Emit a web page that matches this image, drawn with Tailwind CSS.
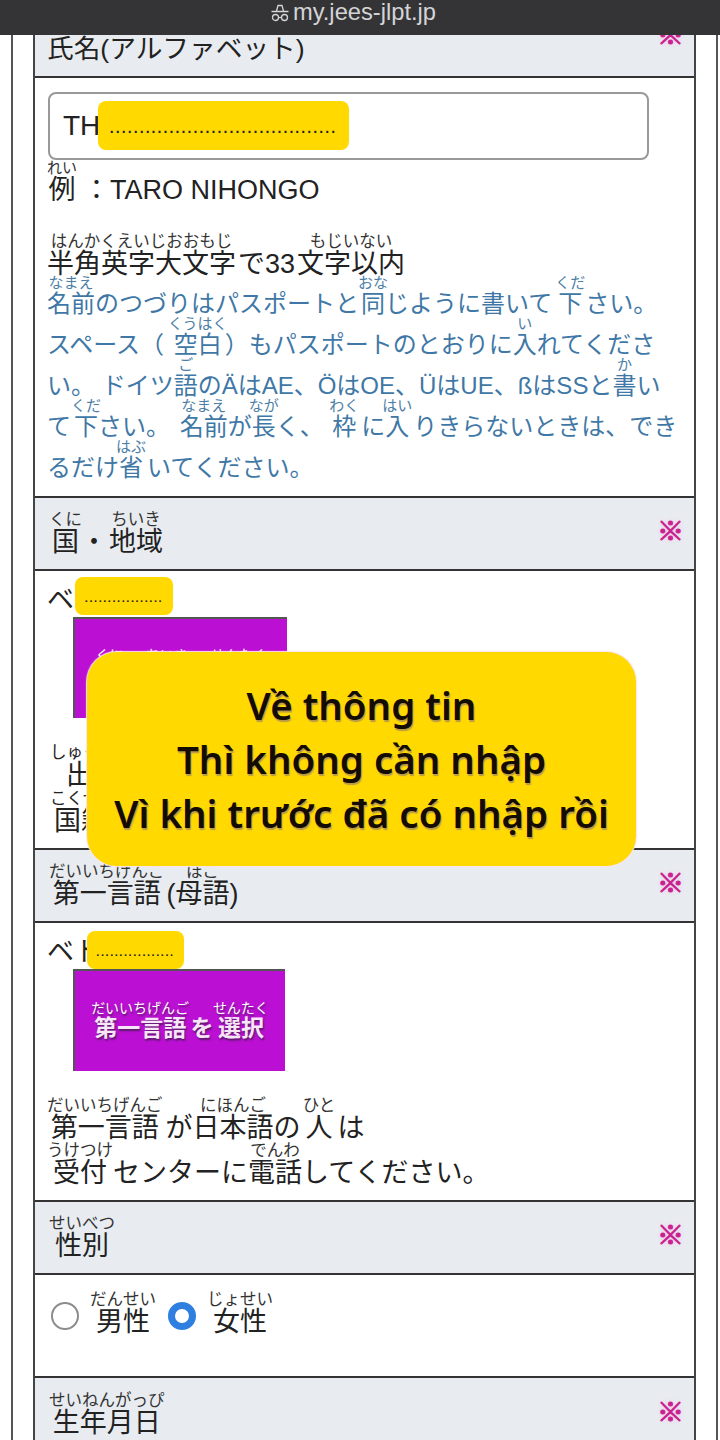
<!DOCTYPE html>
<html lang="ja">
<head>
    <meta charset="UTF-8">
    <meta name="viewport" content="width=device-width, initial-scale=1.0">
    <title>my.jees-jlpt.jp</title>
    <script src="https://cdn.jsdelivr.net/npm/@tailwindcss/browser@4"></script>
</head>
<body class="relative w-[720px] h-[1440px] overflow-hidden bg-white text-[#222] font-['Liberation_Sans','Noto_Sans_CJK_JP',sans-serif] [&_ruby]:[ruby-align:center] [&_rt]:text-[16.5px] [&_rt]:leading-[18px] [&_rt]:text-[#333]">

    <!-- barra del navegador -->
    <div class="relative z-20 flex h-[35px] items-start justify-center gap-[3px] bg-[#343437] pr-[14px] text-[#d4d4d6]">
        <svg class="mt-[3px]" width="20" height="20" viewBox="0 0 20 20" fill="none" stroke="currentColor" stroke-width="1.3">
            <path d="M6.5 8 8 2.5h4L13.500 8M1.500 8.500h17"/>
            <circle cx="5.500" cy="14.500" r="3"/>
            <circle cx="14.500" cy="14.500" r="3"/>
            <path d="M8.500 14.500h3"/>
        </svg>
        <span class="text-[23.700px] leading-[24px]">my.jees-jlpt.jp</span>
    </div>

    <div class="ml-[11px] h-[1405px] w-[707px] border-x-2 border-[#555] pl-[20px]">
        <div class="w-[663px] border-x-2 border-[#444]">

            <!-- nombre -->
            <div class="flex h-[43px] items-end justify-between border-b-2 border-[#333] bg-[#e8ecf0] pl-[12px] pr-[10px]">
                <span class="mb-[8px] text-[26.700px] leading-[38px]">氏名(アルファベット)</span>
                <span class="mb-[25px] text-[27px] leading-[30px] text-[#c9218f] [-webkit-text-stroke:1px_#c9218f] [text-shadow:0_0_5px_#f8a8e8]">※</span>
            </div>
            <div class="h-[418px] pl-[12px] pt-[14px]">
                <div class="ml-px flex h-[68px] w-[601px] items-center rounded-lg border-2 border-[#999] pl-[13px] text-[28px]">TH</div>
                <div class="-mt-px h-[45px] text-[27px] leading-[45px]"><ruby>例<rt class="!text-[15px]">れい</rt></ruby> ：TARO NIHONGO</div>
                <div class="mt-[28px] h-[42px] text-[27px] leading-[52px] whitespace-nowrap"><ruby>半角英字大文字<rt>はんかくえいじおおもじ</rt></ruby><span class="ml-[2px]">で33</span><ruby class="ml-[2px]">文字以内<rt>もじいない</rt></ruby></div>
                <div class="text-[24px] leading-[41px] text-[#3f78a6] whitespace-nowrap [&_rt]:!text-[15px] [&_rt]:!leading-[15px] [&_rt]:!text-[#4d7ea6] [&>div]:h-[41px]">
                    <div><ruby>名前<rt>なまえ</rt></ruby>のつづりはパスポートと<ruby class="ml-[2px]">同<rt>おな</rt></ruby>じように書いて<ruby class="ml-[6px]">下<rt>くだ</rt></ruby><span class="ml-[3px]">さい。</span></div>
                    <div>スペース（ <ruby>空白<rt>くうはく</rt></ruby>）もパスポートのとおりに<ruby>入<rt>い</rt></ruby>れてくださ</div>
                    <div>い。 ドイツ<ruby>語<rt>ご</rt></ruby>のÄはAE、ÖはOE、ÜはUE、ßはSSと<ruby>書<rt>か</rt></ruby>い</div>
                    <div>て<ruby class="ml-[3px]">下<rt>くだ</rt></ruby>さい。 <ruby class="ml-[3px]">名前<rt>なまえ</rt></ruby>が<ruby>長<rt>なが</rt></ruby>く、 <ruby class="ml-[2px]">枠<rt>わく</rt></ruby><span class="ml-[5px]">に</span><ruby>入<rt>はい</rt></ruby><span class="ml-[4px]">りきらないときは、でき</span></div>
                    <div>るだけ<ruby>省<rt>はぶ</rt></ruby><span class="ml-[4px]">いてください。</span></div>
                </div>
            </div>

            <!-- pais -->
            <div class="flex h-[75px] items-center justify-between border-y-2 border-[#333] bg-[#e8ecf0] pl-[14px] pr-[10px]">
                <span class="mt-[6px] text-[27px] leading-[44px]"><ruby>国<rt>くに</rt></ruby><span class="mx-[1.500px]">・</span><ruby>地域<rt>ちいき</rt></ruby></span>
                <span class="-mt-[2px] text-[27px] text-[#c9218f] [-webkit-text-stroke:1px_#c9218f] [text-shadow:0_0_5px_#f8a8e8]">※</span>
            </div>
            <div class="h-[277px] pl-[12px] pt-[12px]">
                <div class="h-[34px] text-[27px] leading-[34px]">ベトナム</div>
                <div class="ml-[26px] flex h-[101px] w-[214px] flex-col items-center justify-center border-t-2 border-l-2 border-[#555] bg-[#bb10d4] text-[23px] leading-[30px] text-white [&_rt]:!text-[14px] [&_rt]:!text-white">
                    <span><ruby>国<rt>くに</rt></ruby>・<ruby>地域<rt>ちいき</rt></ruby>を<ruby>選択<rt>せんたく</rt></ruby></span>
                </div>
                <div class="mt-[26px] pl-[3px] text-[16.500px] leading-[16px]">しゅっしんち</div>
                <div class="ml-[19px] text-[27px] leading-[30px]">出身地</div>
                <div class="text-[16.500px] leading-[16px] pl-[3px]">こくせき</div>
                <div class="ml-[7px] text-[27px] leading-[30px]">国籍</div>
            </div>

            <!-- lengua materna -->
            <div class="flex h-[75px] items-center justify-between border-y-2 border-[#333] bg-[#e8ecf0] pl-[14px] pr-[10px]">
                <span class="mt-[6px] text-[27px] leading-[42px]"><ruby>第一言語<rt>だいいちげんご</rt></ruby><span class="ml-[3px]">(</span><ruby>母語<rt>ほご</rt></ruby>)</span>
                <span class="-mt-[2px] text-[27px] text-[#c9218f] [-webkit-text-stroke:1px_#c9218f] [text-shadow:0_0_5px_#f8a8e8]">※</span>
            </div>
            <div class="h-[277px] pl-[12px] pt-[12px]">
                <div class="h-[34px] text-[27px] leading-[34px]">ベトナム語</div>
                <div class="ml-[26px] flex h-[102px] w-[212px] items-center justify-center border-t-2 border-l-2 border-[#555] bg-[#bb10d4] text-[23px] font-bold leading-[30px] text-[#f6e6f8] [&_rt]:!text-[14px] [&_rt]:!text-white [&_rt]:font-normal [text-shadow:1px_2px_2px_#5a1a66]">
                    <span><ruby>第一言語<rt>だいいちげんご</rt></ruby><span class="mx-[2px]">を</span><ruby>選択<rt>せんたく</rt></ruby></span>
                </div>
                <div class="mt-[25px] h-[45px] text-[27px] leading-[46px] whitespace-nowrap"><ruby>第一言語<rt>だいいちげんご</rt></ruby><span class="ml-[4px]">が</span><ruby>日本語<rt>にほんご</rt></ruby>の<ruby class="ml-[5px]">人<rt>ひと</rt></ruby><span class="ml-[5px]">は</span></div>
                <div class="h-[46px] text-[27px] leading-[46px] whitespace-nowrap"><ruby>受付<rt>うけつけ</rt></ruby><span class="ml-[3px]">センターに</span><ruby>電話<rt>でんわ</rt></ruby>してください。</div>
            </div>

            <!-- sexo -->
            <div class="flex h-[75px] items-center justify-between border-y-2 border-[#333] bg-[#e8ecf0] pl-[14px] pr-[10px]">
                <span class="mt-[6px] text-[27px] leading-[42px]"><ruby>性別<rt>せいべつ</rt></ruby></span>
                <span class="-mt-[2px] text-[27px] text-[#c9218f] [-webkit-text-stroke:1px_#c9218f] [text-shadow:0_0_5px_#f8a8e8]">※</span>
            </div>
            <div class="flex h-[101px] items-start pl-[16px] pt-[15px]">
                <span class="mt-[12px] size-[28px] rounded-full border-2 border-[#8c8c8c]"></span>
                <span class="ml-[11px] text-[27px] leading-[36px]"><ruby>男性<rt>だんせい</rt></ruby></span>
                <span class="ml-[12px] mt-[12px] size-[28px] rounded-full border-[7px] border-[#2f7fe0] bg-white"></span>
                <span class="ml-[11px] text-[27px] leading-[36px]"><ruby>女性<rt>じょせい</rt></ruby></span>
            </div>

            <!-- fecha de nacimiento -->
            <div class="flex h-[74px] items-center justify-between border-t-2 border-[#333] bg-[#e8ecf0] pl-[14px] pr-[10px]">
                <span class="mt-[6px] text-[27px] leading-[42px]"><ruby>生年月日<rt>せいねんがっぴ</rt></ruby></span>
                <span class="-mt-[2px] text-[27px] text-[#c9218f] [-webkit-text-stroke:1px_#c9218f] [text-shadow:0_0_5px_#f8a8e8]">※</span>
            </div>
        </div>
    </div>

    <!-- recuadros amarillos encima del contenido -->
    <div class="absolute left-[98px] top-[101px] flex h-[49px] w-[251px] items-center justify-center overflow-hidden rounded-lg bg-[#ffd900] pt-[4px] text-[14px] font-bold leading-[14px] tracking-[2.100px] text-[#222]">......................................</div>
    <div class="absolute left-[75px] top-[577px] flex h-[38px] w-[98px] items-center justify-center overflow-hidden rounded-lg bg-[#ffd900] pt-[4px] text-[11px] font-bold leading-[11px] tracking-[1.550px] text-[#222]">.................</div>
    <div class="absolute left-[87px] top-[931px] flex h-[38px] w-[97px] items-center justify-center overflow-hidden rounded-lg bg-[#ffd900] pt-[4px] text-[11px] font-bold leading-[11px] tracking-[1.550px] text-[#222]">.................</div>

    <div class="absolute left-[87px] top-[652px] z-10 flex h-[214px] w-[549px] flex-col items-center justify-center rounded-[30px] bg-[#ffd900] font-['Noto_Sans',sans-serif] text-[38.500px] font-semibold leading-[54px] text-[#140c00] shadow-[0_0_1px_1px_#fde4ec] [text-shadow:1px_2px_1px_#b99a4a]">
        <span>Về thông tin</span>
        <span>Thì không cần nhập</span>
        <span>Vì khi trước đã có nhập rồi</span>
    </div>
</body>
</html>
